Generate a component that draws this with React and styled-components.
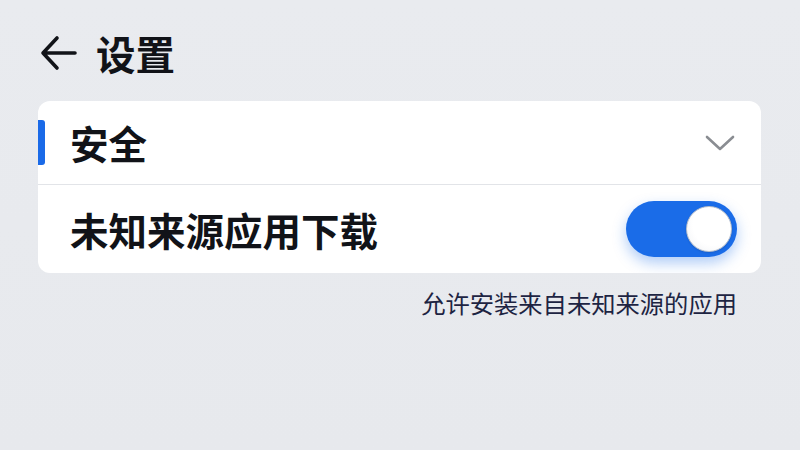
import React from "react";
import styled, { createGlobalStyle } from "styled-components";

const Global = createGlobalStyle`
  html, body { margin: 0; padding: 0; }
  body {
    width: 800px; height: 450px; overflow: hidden;
    background: #e8eaee;
    font-family: "Noto Sans CJK SC", "Noto Sans", sans-serif;
  }
`;

const Page = styled.div`
  width: 800px; height: 450px; box-sizing: border-box;
  padding: 28px 39px 0 38px;
  display: flex; flex-direction: column;
  background: linear-gradient(180deg, #e9ebef 0%, #e7e9ed 100%);
`;

const Header = styled.div`
  height: 50px; display: flex; align-items: center; gap: 19px;
  padding-left: 2px; margin-bottom: 23px;
`;

const BackIcon = styled.svg`
  width: 37px; height: 36px; flex: none;
`;

const Title = styled.h1`
  margin: 0; font-size: 39.5px; font-weight: 700; color: #111318;
  line-height: 1; letter-spacing: 0;
`;

const Card = styled.div`
  background: #ffffff; border-radius: 12px; overflow: hidden;
  display: flex; flex-direction: column;
`;

const Row = styled.div`
  position: relative;
  height: ${p => p.$h}px; display: flex; align-items: center;
  justify-content: space-between;
  padding: 0 24px 0 32px;
  border-top: ${p => (p.$divider ? "1px solid #e2e4e8" : "none")};
`;

const Accent = styled.span`
  position: absolute; left: 0; top: 19px; width: 7px; height: 45px;
  background: #1a6ae8; border-radius: 0 3px 3px 0;
`;

const Label = styled.span`
  font-size: 38.5px; font-weight: 600; color: #111318; line-height: 1;
`;

const Chevron = styled.svg`
  width: 30px; height: 18px; margin-right: 2px;
`;

const Toggle = styled.div`
  width: 111px; height: 56px; border-radius: 28px;
  background: #1a6ce8; box-sizing: border-box; padding: 5px;
  display: flex; justify-content: flex-end; align-items: center;
  box-shadow: 0 6px 14px rgba(26, 108, 232, 0.35);
`;

const Knob = styled.div`
  width: 46px; height: 46px; border-radius: 50%; box-sizing: border-box;
  background: radial-gradient(circle at 60% 40%, #ffffff 55%, #eef0f4 100%);
  border: 1.5px solid #b9bfc9;
  box-shadow: 0 1px 2px rgba(0, 0, 0, 0.12);
`;

const Hint = styled.p`
  margin: 18px 24px 0 0; align-self: flex-end;
  font-size: 24.3px; font-weight: 400; color: #1d2442; line-height: 1;
`;

export default function App() {
  return (
    <>
      <Global />
      <Page>
        <Header>
          <BackIcon viewBox="0 0 37 36" fill="none" stroke="#111318" strokeWidth="3.6" strokeLinecap="round" strokeLinejoin="round">
            <path d="M35 18H3M17 3L3 18l14 15" />
          </BackIcon>
          <Title>设置</Title>
        </Header>
        <Card>
          <Row $h={83}>
            <Accent />
            <Label>安全</Label>
            <Chevron viewBox="0 0 30 18" fill="none" stroke="#8a8d92" strokeWidth="2.6" strokeLinecap="round" strokeLinejoin="round">
              <path d="M2 3l13 12L28 3" />
            </Chevron>
          </Row>
          <Row $h={88} $divider>
            <Label>未知来源应用下载</Label>
            <Toggle><Knob /></Toggle>
          </Row>
        </Card>
        <Hint>允许安装来自未知来源的应用</Hint>
      </Page>
    </>
  );
}
